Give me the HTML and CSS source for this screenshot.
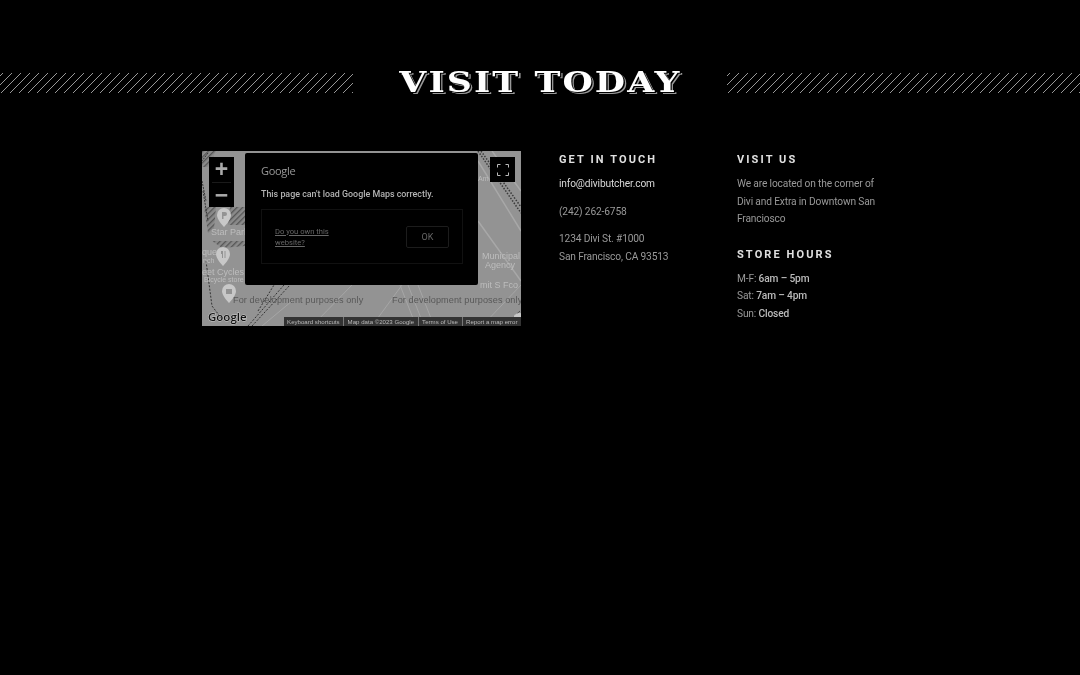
FILE: index.html
```html
<!DOCTYPE html>
<html lang="en">
<head>
<meta charset="utf-8">
<title>Visit Today</title>
<link rel="stylesheet" href="styles.css">
</head>
<body>
<header class="title-row">
  <div class="stripes"></div>
  <h1 class="title"><span class="title-text">VISIT TODAY</span></h1>
  <div class="stripes"></div>
</header>
<main class="content">
  <div class="map">
    <svg class="map-art" width="319" height="175" viewBox="0 0 319 175" aria-hidden="true">
      <defs>
        <pattern id="hatch" width="4" height="4" patternUnits="userSpaceOnUse" patternTransform="rotate(45)">
          <rect width="4" height="4" fill="#8a8a8a"/>
          <rect width="1.300" height="4" fill="#555"/>
        </pattern>
      </defs>
      <rect width="319" height="175" fill="#939393"/>
      <path d="M0 0H14L6 16H0Z" fill="url(#hatch)"/>
      <path d="M2 56H14L12 78L6 82Z" fill="url(#hatch)"/>
      <path d="M28 56H43V74H26Z" fill="url(#hatch)"/>
      <path d="M10 90H43V95L20 97Z" fill="url(#hatch)"/>
      <path d="M6 2L0 10M0 30L4 50M1 40L6 70" stroke="#333" stroke-width="1" stroke-dasharray="2 1" fill="none"/>
      <path d="M276 0L319 62M279 0L319 56" stroke="#3a3a3a" stroke-width="1.500" stroke-dasharray="1.500 1.500" fill="none"/>
      <path d="M276 10L319 80M290 0L319 40M276 70L319 130" stroke="#a8a8a8" stroke-width="1.500" fill="none"/>
      <path d="M4 110L10 155L20 168M46 175L82 134M50 175L88 134M56 160L72 134" stroke="#333" stroke-width="1" stroke-dasharray="2 1.500" fill="none"/>
      <path d="M110 175L150 134M170 175L200 134M198 134L214 175M206 134L222 175M216 134L232 175M280 175L319 134M60 175L90 150" stroke="#a6a6a6" stroke-width="1" fill="none"/>
      <path d="M302 175L318 160M306 175L319 163" stroke="#2b2b2b" stroke-width="1" stroke-dasharray="2 1" fill="none"/>
      <path class="pin" d="M22 57a7 7 0 0 1 7 7c0 5-7 12-7 12s-7-7-7-12a7 7 0 0 1 7-7Z"/>
      <path class="pin" d="M21 96a7 7 0 0 1 7 7c0 5-7 12-7 12s-7-7-7-12a7 7 0 0 1 7-7Z"/>
      <path class="pin" d="M27 133a7 7 0 0 1 7 7c0 5-7 12-7 12s-7-7-7-12a7 7 0 0 1 7-7Z"/>
      <circle class="pin" cx="317" cy="168" r="6"/>
      <path class="glyph" d="M20 61h3a2 2 0 0 1 0 4h-1.500v3H20Z"/>
      <path class="glyph" d="M19 100v3h1v4h1v-7ZM22.500 100v7h1v-7Z"/>
      <path class="glyph" d="M24 138h6v5h-6Z"/>
      <text class="lbl" x="9" y="84">Star Park</text>
      <text class="lbl" x="0" y="124">eet Cycles</text>
      <text class="lbl-sm" x="2" y="131">Bicycle store</text>
      <text class="lbl-sm" x="1" y="112">nch</text>
      <text class="lbl" x="0" y="104">que</text>
      <text class="lbl-sm" x="276" y="30">Am</text>
      <text class="lbl" x="280" y="108">Municipal</text>
      <text class="lbl" x="283" y="117">Agency</text>
      <text class="lbl" x="278" y="137">mit S Fco</text>
      <text class="dev" x="31" y="152">For development purposes only</text>
      <text class="dev" x="190" y="152">For development purposes only</text>
      <text class="wordmark" x="6" y="170">Google</text>
    </svg>
    <div class="zoom-ctl">
      <span class="zoom-btn">+</span>
      <span class="zoom-sep"></span>
      <span class="zoom-btn">−</span>
    </div>
    <div class="fullscreen">
      <svg width="14" height="14" viewBox="0 0 14 14" aria-hidden="true"><path d="M1.500 4.500V1.500H4.500M9.500 1.500H12.500V4.500M12.500 9.500V12.500H9.500M4.500 12.500H1.500V9.500" fill="none" stroke="#bbb" stroke-width="1"/></svg>
    </div>
    <div class="dialog">
      <div class="dialog-logo">Google</div>
      <div class="dialog-msg">This page can't load Google Maps correctly.</div>
      <div class="dialog-box">
        <a class="dialog-link">Do you own this website?</a>
        <span class="dialog-ok">OK</span>
      </div>
    </div>
    <div class="attrib">
      <span>Keyboard shortcuts</span><span>Map data ©2023 Google</span><span>Terms of Use</span><span>Report a map error</span>
    </div>
  </div>
  <section class="col col-touch">
    <h4 class="col-head">GET IN TOUCH</h4>
    <p class="line bright">info@divibutcher.com</p>
    <p class="line para">(242) 262-6758</p>
    <p class="line para">1234 Divi St. #1000<br>San Francisco, CA 93513</p>
  </section>
  <section class="col">
    <h4 class="col-head">VISIT US</h4>
    <p class="line dim">We are located on the corner of Divi and Extra in Downtown San Franciosco</p>
    <h4 class="col-head col-head-2">STORE HOURS</h4>
    <p class="line dim">M-F: <b>6am – 5pm</b><br>Sat: <b>7am – 4pm</b><br>Sun: <b>Closed</b></p>
  </section>
</main>
</body>
</html>
```

FILE: styles.css
```css
* { box-sizing: border-box; }
html, body { margin: 0; height: 100%; background: #000; }
body { font-family: Roboto, "Open Sans", sans-serif; color: #999; overflow: hidden; filter: grayscale(1) blur(0.35px); }

.title-row { display: flex; align-items: center; justify-content: space-between; padding-top: 63px; height: 103px; margin-bottom: 4px; }
.stripes {
  width: 353px; height: 20px;
  background: repeating-linear-gradient(-45deg, #000 0, #999 0.7px, #000 1.4px, #000 6.364px);
}
.title {
  margin: 0; font-family: "DejaVu Serif", serif; font-weight: 700; font-size: 27px; line-height: 28px; color: #fff; white-space: nowrap;
  text-shadow: 1px 1px 0 #000, 2px 2px 0 #999;
}
.title-text { display: inline-block; letter-spacing: 1.600px; transform: scaleX(1.29); }

.content { display: flex; align-items: flex-start; padding: 44px 0 0 202px; }
.map { position: relative; width: 319px; height: 175px; overflow: hidden; flex: none; background: #939393; margin-right: 38px; }
.map-art { display: block; }
.pin { fill: #c8c8c8; }
.glyph { fill: #939393; }
.lbl { font: 9px "Liberation Sans", sans-serif; fill: #bdbdbd; }
.lbl-sm { font: 7px "Liberation Sans", sans-serif; fill: #bdbdbd; }
.dev { font: 9.100px "Liberation Sans", sans-serif; fill: #585858; letter-spacing: 0.100px; }
.wordmark { font: 600 11.500px "Open Sans", sans-serif; fill: #111; stroke: #ccc; stroke-width: 1px; paint-order: stroke; }

.zoom-ctl { position: absolute; left: 7px; top: 6px; width: 25px; height: 50px; background: #000; display: flex; flex-direction: column; align-items: center; }
.zoom-btn { height: 24.500px; font: 700 23px/24px "Liberation Sans", sans-serif; color: #aaa; }
.zoom-sep { width: 19px; height: 1px; background: #1a1a1a; }
.fullscreen { position: absolute; right: 6px; top: 6px; width: 25px; height: 25px; background: #000; display: flex; align-items: center; justify-content: center; }

.dialog { position: absolute; left: 43px; top: 2px; width: 233px; height: 132px; background: #000; border-radius: 2px; padding: 11px 16px 0; }
.dialog-logo { font: 400 11px/14px "Open Sans", sans-serif; color: #999; letter-spacing: -0.3px; }
.dialog-msg { margin-top: 10px; font: 500 8.900px/12px Roboto, sans-serif; color: #b5b5b5; white-space: nowrap; }
.dialog-box { margin-top: 9px; width: 202px; height: 55px; border: 1px solid #111; display: flex; align-items: center; justify-content: space-between; padding: 0 13px; }
.dialog-link { width: 66px; font: 400 7.600px/11px Roboto, sans-serif; color: #666; text-decoration: underline; }
.dialog-ok { width: 43px; height: 22px; border: 1px solid #1c1c1c; border-radius: 2px; font: 400 9px/20px Roboto, sans-serif; color: #666; text-align: center; }

.attrib { position: absolute; right: 0; bottom: 0; height: 9px; display: flex; background: #333; font: 6.100px/9px "Liberation Sans", sans-serif; color: #bbb; }
.attrib span { padding: 0 3.500px; border-left: 1px solid #777; white-space: nowrap; }
.attrib span:first-child { border-left: 0; }

.col { width: 145px; flex: none; }
.col-touch { width: 178px; }
.col-head { margin: 1px 0 0; font: 700 11px/16px Roboto, sans-serif; letter-spacing: 2.100px; color: #e0e0e0; }
.col-head-2 { margin-top: 19px; }
.line { margin: 7px 0 0; font-size: 10.200px; line-height: 17.500px; letter-spacing: -0.150px; }
.para { margin-top: 10px; }
.bright { color: #d8d8d8; }
.dim b { font-weight: 500; color: #bbb; }
```
